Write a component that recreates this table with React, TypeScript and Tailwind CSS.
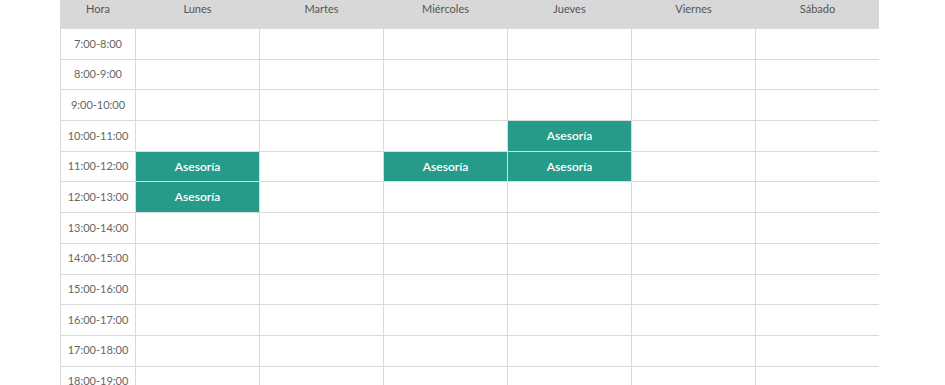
import React from "react";

const days = ["Lunes", "Martes", "Miércoles", "Jueves", "Viernes", "Sábado"];
const hours = [
  "7:00-8:00",
  "8:00-9:00",
  "9:00-10:00",
  "10:00-11:00",
  "11:00-12:00",
  "12:00-13:00",
  "13:00-14:00",
  "14:00-15:00",
  "15:00-16:00",
  "16:00-17:00",
  "17:00-18:00",
  "18:00-19:00",
];

// row index -> day indexes with a booking
const booked: Record<number, number[]> = {
  3: [3],
  4: [0, 2, 3],
  5: [0],
};

export default function App() {
  return (
    <div className="w-[945px] h-[385px] overflow-hidden bg-white font-['Lato',sans-serif]">
      <div className="ml-[60px] -mt-[11px] w-[819px] grid grid-cols-[74px_repeat(6,123px)] gap-px bg-[#dadada] border border-[#dadada]">
        <div className="h-[38px] bg-[#d8d8d8] flex items-center justify-center text-[11px] text-[#555]">Hora</div>
        {days.map((d) => (
          <div key={d} className="h-[38px] bg-[#d8d8d8] flex items-center justify-center text-[11px] text-[#555]">
            {d}
          </div>
        ))}
        {hours.map((h, r) => (
          <React.Fragment key={h}>
            <div className="h-[29.7px] bg-white flex items-center justify-center text-[11px] text-[#666]">{h}</div>
            {days.map((d, c) =>
              booked[r]?.includes(c) ? (
                <div
                  key={d}
                  className="h-[29.7px] bg-[#279b8a] flex items-center justify-center text-[12px] font-semibold text-white"
                >
                  Asesoría
                </div>
              ) : (
                <div key={d} className="h-[29.7px] bg-white" />
              )
            )}
          </React.Fragment>
        ))}
      </div>
    </div>
  );
}
